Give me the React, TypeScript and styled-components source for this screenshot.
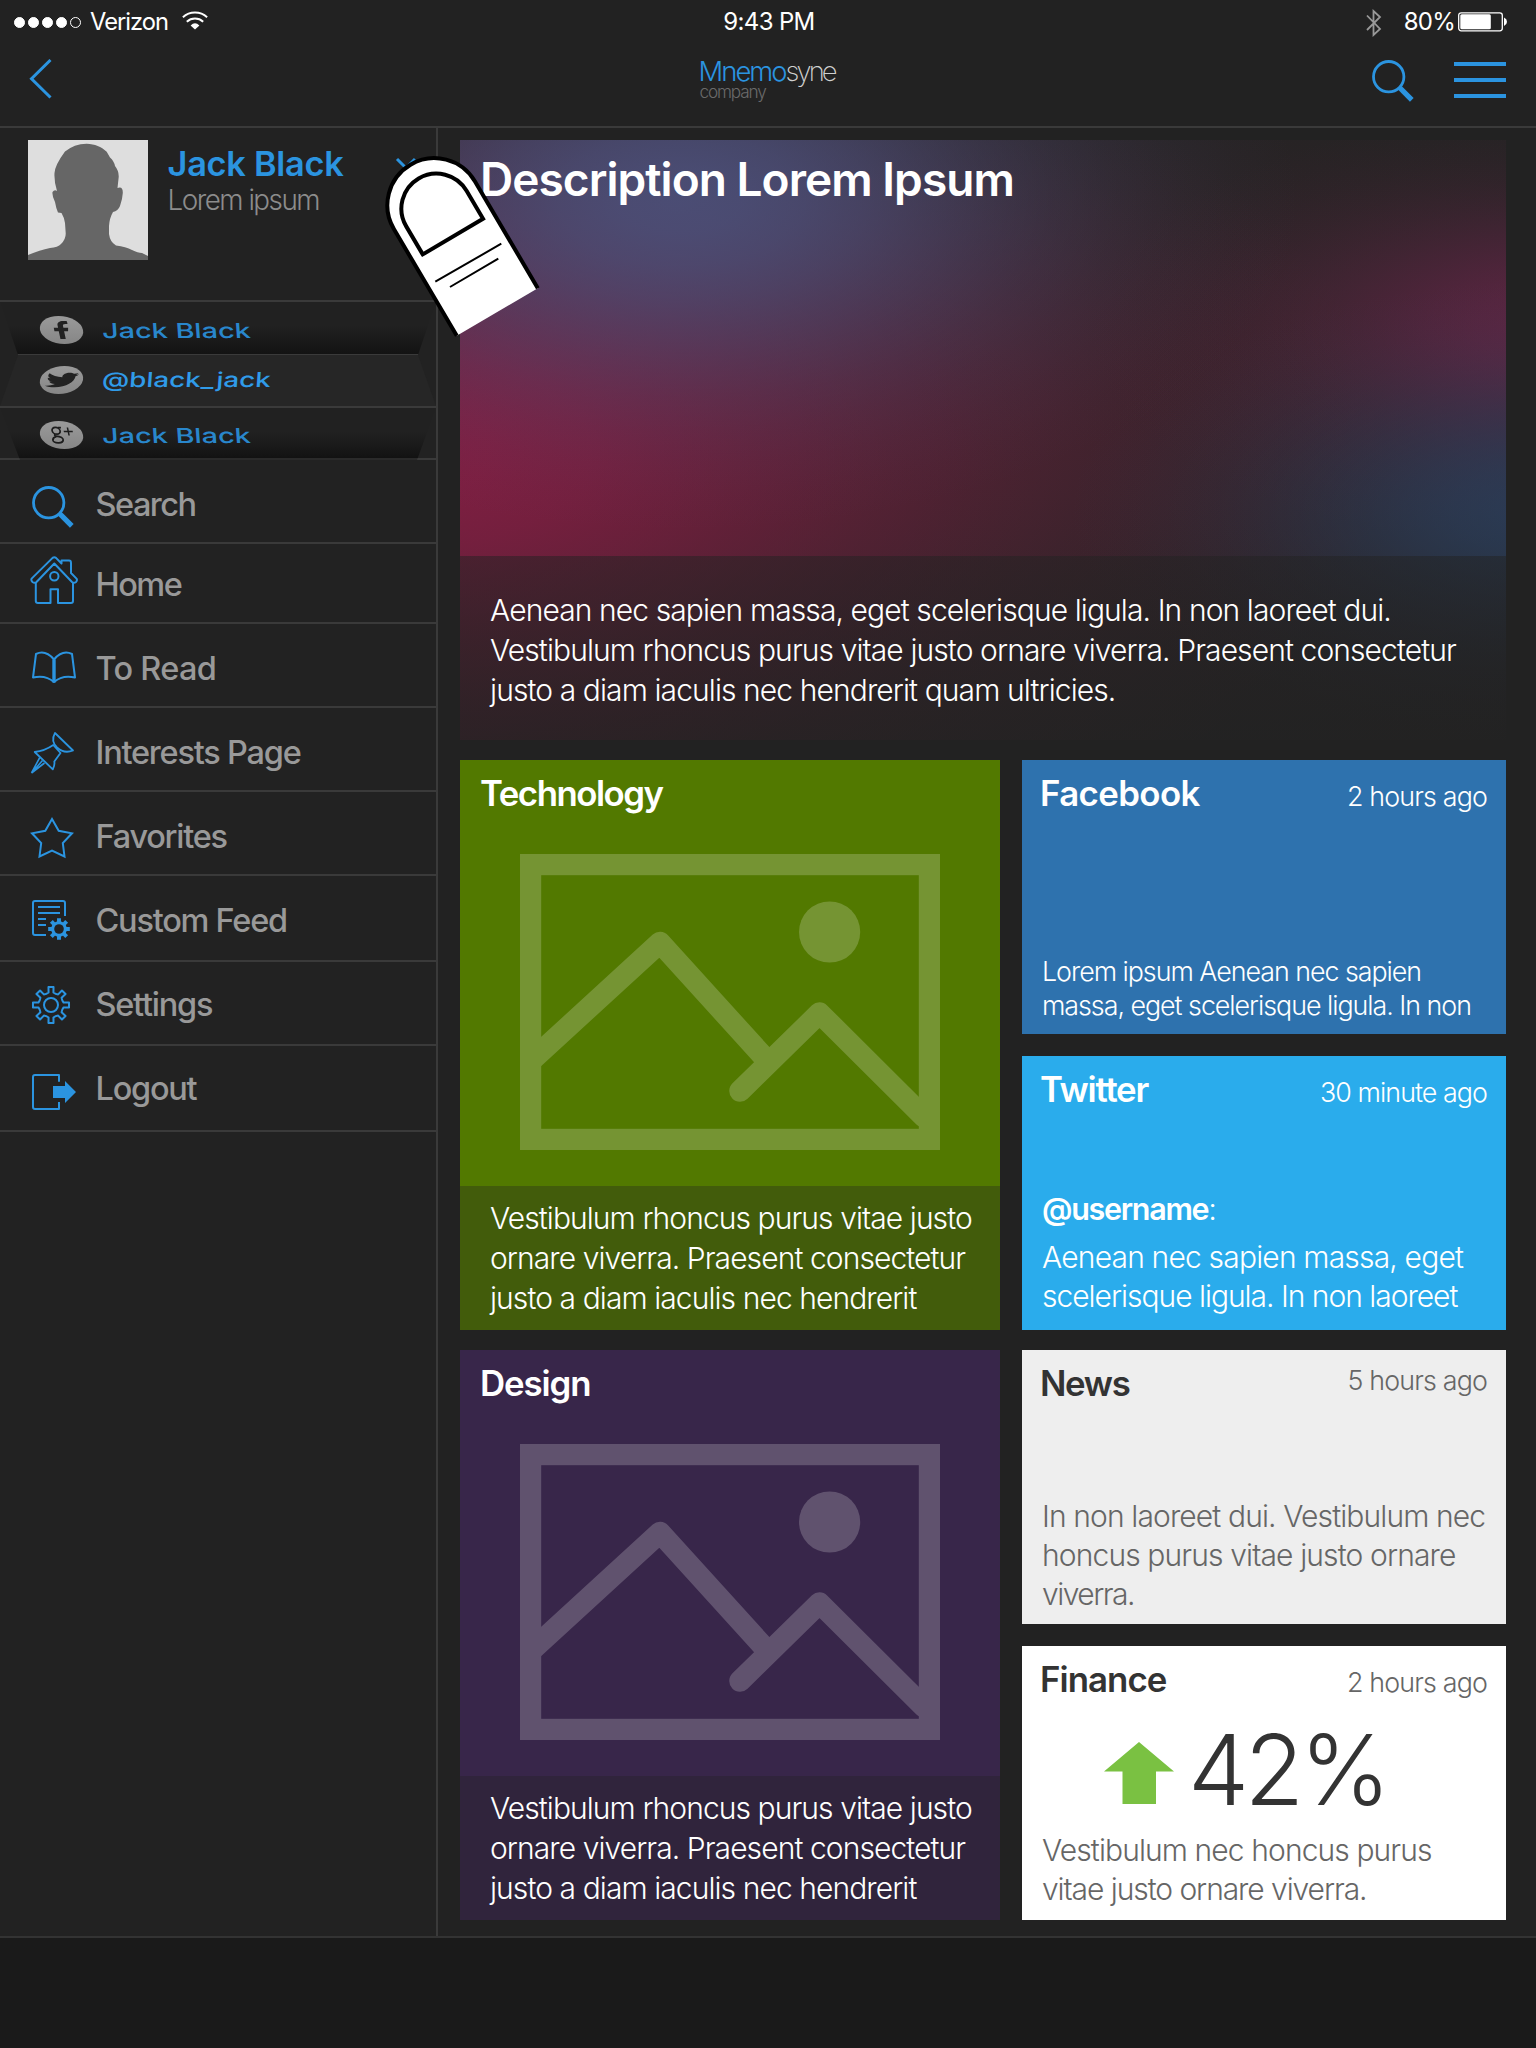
import React from 'react';
import styled, { createGlobalStyle, css } from 'styled-components';
import { FaFacebookF, FaTwitter } from 'react-icons/fa';

const BLUE = '#2b94e0';
const LINE = '#3a3a3a';
const BG = '#222222';

const GlobalStyle = createGlobalStyle`
  * { box-sizing: border-box; }
  body {
    margin: 0;
    background: ${BG};
    color: #fff;
    font-family: Inter, "Liberation Sans", sans-serif;
    font-weight: 300;
    font-kerning: normal;
  }
  svg { display: block; flex: none; }
`;

/* ---------- shared text ---------- */

const Line = styled.div<{ $size: number; $lh: number; $ls?: number; $weight?: number; $color?: string }>`
  font-size: ${p => p.$size}px;
  line-height: ${p => p.$lh}px;
  letter-spacing: ${p => p.$ls ?? 0}px;
  font-weight: ${p => p.$weight ?? 300};
  white-space: nowrap;
  ${p => p.$color && css`color: ${p.$color};`}
`;

/* ---------- frame ---------- */

const Screen = styled.div`
  position: relative;
  display: flex;
  flex-direction: column;
  width: 1536px;
  height: 2048px;
  overflow: hidden;
  background: ${BG};
`;

const StatusBar = styled.div`
  display: grid;
  grid-template-columns: 1fr auto 1fr;
  height: 44px;
`;

const StatusLeft = styled.div`
  display: flex;
  align-items: flex-start;
  padding-left: 14px;
`;

const StatusClock = styled(Line)`
  padding-left: 2px;
`;

const StatusRight = styled.div`
  display: flex;
  align-items: flex-start;
  justify-content: flex-end;
  padding-right: 28px;
`;

const Dots = styled.div`
  display: flex;
  gap: 3px;
  padding-top: 16.5px;
  margin-right: 9px;
`;

const Dot = styled.i<{ $empty?: boolean }>`
  width: 11px;
  height: 11px;
  border-radius: 50%;
  border: 1px solid #fff;
  background: ${p => (p.$empty ? 'transparent' : '#fff')};
`;

const Offset = styled.div<{ $top: number; $left?: number; $right?: number }>`
  margin: ${p => p.$top}px ${p => p.$right ?? 0}px 0 ${p => p.$left ?? 0}px;
`;

const Header = styled.header`
  display: grid;
  grid-template-columns: 1fr auto 1fr;
  height: 84px;
  border-bottom: 2px solid ${LINE};
`;

const HeaderLeft = styled.div`
  padding: 15px 0 0 29px;
`;

const HeaderRight = styled.div`
  display: flex;
  justify-content: flex-end;
  gap: 38px;
  padding: 16px 30px 0 0;
`;

const Burger = styled.div`
  display: flex;
  flex-direction: column;
  gap: 12px;
  padding-top: 2px;
`;

const BurgerBar = styled.i`
  width: 52px;
  height: 4px;
  background: ${BLUE};
`;

const Logo = styled.div`
  width: 139px;
  padding-top: 14px;
`;

const LogoTail = styled.span`
  font-weight: 200;
  letter-spacing: -2.9px;
  color: #d0d0d0;
`;

const LogoSub = styled(Line)`
  padding-left: 1px;
`;

const Body = styled.div`
  display: flex;
  height: 1808px;
`;

const Footer = styled.footer`
  flex: 1;
  border-top: 2px solid #333;
  background: #1a1a1a;
`;

/* ---------- sidebar ---------- */

const Sidebar = styled.aside`
  width: 438px;
  flex: none;
  border-right: 2px solid ${LINE};
`;

const Profile = styled.div`
  display: flex;
  height: 174px;
  padding: 12px 0 0 28px;
  border-bottom: 2px solid ${LINE};
`;

const ProfileText = styled.div`
  width: 228px;
  padding: 4px 0 0 19.5px;
`;

const ChevronBox = styled.div`
  padding: 17px 0 0 19px;
`;

const SocialRow = styled.div<{ $kind: 'in' | 'out' | 'last' }>`
  display: flex;
  align-items: flex-start;
  height: ${p => (p.$kind === 'last' ? 52 : 53)}px;
  padding-left: 40px;
  background: ${p =>
    p.$kind === 'out'
      ? `linear-gradient(${LINE}, ${LINE}) 0 51px / 100% 2px no-repeat, #262626`
      : p.$kind === 'in'
      ? `linear-gradient(${LINE}, ${LINE}) 0 52px / 100% 1px no-repeat, linear-gradient(#212121 45%, #191919 75%, #121212 100%)`
      : `linear-gradient(#212121 45%, #191919 75%, #121212 96%, #2a2a2a 97%)`};
  clip-path: ${p =>
    p.$kind === 'out'
      ? 'polygon(18px 0, 418px 0, 436px 51px, 436px 53px, 0 53px, 0 51px)'
      : p.$kind === 'in'
      ? 'polygon(0 0, 436px 0, 418px 53px, 18px 53px)'
      : 'polygon(0 0, 436px 0, 417px 52px, 20px 52px)'};
`;

const SocialList = styled.div`
  height: 158px;
  background: linear-gradient(${LINE}, ${LINE}) 0 156px / 100% 2px no-repeat;
`;

const Badge = styled.div<{ $skew: number; $top: number; $w: number; $h: number }>`
  display: flex;
  align-items: center;
  justify-content: center;
  width: 43px;
  height: 28px;
  margin-top: ${p => p.$top}px;
  border-radius: 50%;
  background: linear-gradient(#9a9a9a, #868686);
  color: #222;
  transform: skewX(${p => p.$skew}deg);
  svg {
    width: ${p => p.$w}px;
    height: ${p => p.$h}px;
  }
`;

const SocialName = styled.div<{ $skew: number; $top: number; $stretch: number; $bright?: boolean }>`
  margin: ${p => p.$top}px 0 0 19px;
  font-size: 20.6px;
  font-weight: 500;
  line-height: 24px;
  white-space: nowrap;
  color: ${p => (p.$bright ? '#309be9' : '#2987cc')};
  transform: skewX(${p => p.$skew}deg) scaleX(${p => p.$stretch});
  transform-origin: 0 50%;
`;

const MenuItem = styled.div<{ $h: number }>`
  display: flex;
  height: ${p => p.$h + 2}px;
  padding-left: 30px;
  border-bottom: 2px solid ${LINE};
`;

const MenuIcon = styled.div<{ $top: number }>`
  width: 65.5px;
  padding-top: ${p => p.$top}px;
`;

const MenuLabel = styled(Line)<{ $top: number }>`
  margin-top: ${p => p.$top + 1.4}px;
  color: #999;
`;

/* ---------- content ---------- */

const Content = styled.main`
  display: flex;
  flex-direction: column;
  gap: 20px;
  width: 1098px;
  padding: 12px 30px 0 22px;
`;

const glow = (rgb: string, alpha: number, w: number, h: number, x: number, y: number) => {
  const stops = Array.from({ length: 11 }, (_, i) => {
    const t = i / 10;
    const a = alpha * (Math.exp(-3.2 * t * t) - Math.exp(-3.2) * t);
    return `rgba(${rgb}, ${Math.max(0, a).toFixed(3)}) ${i * 10}%`;
  });
  return `radial-gradient(${w}px ${h}px at ${x}px ${y}px, ${stops.join(', ')})`;
};

const Hero = styled.section`
  display: flex;
  flex-direction: column;
  justify-content: space-between;
  height: 600px;
  background:
    ${glow('76, 84, 128', 0.85, 620, 330, 220, 60)},
    ${glow('42, 68, 102', 0.7, 480, 230, 1090, 370)},
    ${glow('108, 38, 76', 0.75, 480, 220, 1110, 190)},
    ${glow('140, 30, 70', 0.88, 1000, 500, -70, 310)},
    ${glow('68, 36, 48', 0.55, 900, 420, 620, 260)},
    #232323;
`;

const HeroTitle = styled(Line)`
  padding: 11px 0 0 20px;
`;

const HeroCaption = styled.div`
  height: 184px;
  padding: 34px 0 0 30px;
  background: linear-gradient(rgba(34, 34, 34, 0.5), rgba(34, 34, 34, 0.65));
`;

const TileRow = styled.div`
  display: flex;
  gap: 22px;
`;

const Stack = styled.div`
  display: flex;
  flex-direction: column;
  gap: 22px;
`;

const PictureTile = styled.article<{ $bg: string }>`
  display: flex;
  flex-direction: column;
  width: 540px;
  height: 570px;
  background: ${p => p.$bg};
`;

const PictureTitle = styled(Line)`
  padding: 12px 0 0 20px;
`;

const Picture = styled.div`
  padding: 40px 0 0 60px;
`;

const PictureCaption = styled.div`
  height: 144px;
  margin-top: auto;
  padding: 12px 0 0 30px;
  background: rgba(34, 34, 34, 0.33);
`;

const FeedTile = styled.article<{ $bg: string; $pad: number; $title: string; $text: string }>`
  display: flex;
  flex-direction: column;
  width: 484px;
  height: 274px;
  padding: 12px 19px ${p => p.$pad}px 18px;
  background: ${p => p.$bg};
  color: ${p => p.$text};
  h2 { color: ${p => p.$title}; }
`;

const FeedHead = styled.div`
  display: flex;
  justify-content: space-between;
`;

const FeedTitle = styled.h2<{ $ls: number }>`
  margin: 0;
  font-size: 34.8px;
  line-height: 42px;
  font-weight: 600;
  letter-spacing: ${p => p.$ls}px;
`;

const FeedBody = styled.div`
  margin-top: auto;
  padding-left: 2px;
`;

const Stat = styled.div`
  display: flex;
  align-items: flex-start;
  height: 62px;
  margin: 39px 0 0 64px;
`;

const Author = styled.strong`
  font-weight: 600;
  letter-spacing: -1.3px;
`;

const Pointer = styled.svg`
  position: absolute;
  left: 380px;
  top: 140px;
`;

/* ---------- icons ---------- */

const stroke = { fill: 'none', stroke: BLUE, strokeWidth: 2, strokeLinejoin: 'round' as const };

const SearchIcon = ({ x = 0 }: { x?: number }) => (
  <svg width={44 + x} height="44" viewBox={`${-x} 0 ${44 + x} 44`} fill="none" stroke={BLUE}>
    <circle cx="16.7" cy="16.7" r="15.2" strokeWidth="2.8" />
    <path d="M27 27 L39.8 39.8" strokeWidth="5.2" />
  </svg>
);

const HomeIcon = () => (
  <svg width="48" height="48" {...stroke}>
    <path d="M1.6 22.6 L22.6 1.9 Q24.3 .6 26 1.9 L31.5 7.5 V4.6 H39 Q41 4.6 41 7 V17 L46.5 22.6 Q47.6 24.5 46 26 Q44 27.6 42 26 L24.3 7.5 L6.5 26 Q4.5 27.6 2.5 26 Q.8 24.5 1.6 22.6Z" />
    <path d="M5.8 26.5 V45 Q5.8 47 8 47 H20.5 V33.3 H28 V47 H41 Q43 47 43 45 V26.5" />
    <circle cx="24.3" cy="20.3" r="4.2" />
  </svg>
);

const BookIcon = () => (
  <svg width="48" height="36" {...stroke}>
    <path d="M24 9.5 Q15.5 -.5 6 4 L3 27.5 Q15.5 24.5 24 32 Q32.5 24.5 45 27.5 L42 4 Q32.5 -.5 24 9.5Z" />
    <path d="M24 9.5V32.5" strokeWidth="3.4" />
  </svg>
);

const PinIcon = () => (
  <svg width="48" height="46" {...stroke} strokeWidth={1.8}>
    <path d="M25 3 L43 20.5 Q34 24 27 17.5 Q20.5 11 25 3Z" />
    <path d="M23.3 15 Q14.5 21 4.7 22 L22.8 39.3 Q25 35 24.3 31.5 L30.5 23 L23.3 15Z" />
    <path d="M1.5 43 L9.8 27.5 M1.5 43 L14.5 33 M1.5 43 L12.5 30.5" strokeWidth="1.6" />
  </svg>
);

const StarIcon = () => (
  <svg width="46" height="44" {...stroke} strokeLinejoin="miter">
    <path d="M22 3 L28.7 14.8 L42 17.3 L32.8 27 L34.5 40.5 L22 34.7 L9.5 40.5 L11.2 27 L2 17.3 L15.3 14.8Z" />
  </svg>
);

const gearPath = (cx: number, cy: number, R: number, r: number, tip: number, root: number) => {
  const pt = (rad: number, deg: number) => {
    const a = (deg * Math.PI) / 180;
    return `${(cx + rad * Math.sin(a)).toFixed(2)} ${(cy - rad * Math.cos(a)).toFixed(2)}`;
  };
  let d = '';
  for (let i = 0; i < 8; i++) {
    const a = i * 45;
    d += `${i ? 'L' : 'M'}${pt(r, a - root)} L${pt(R, a - tip)} L${pt(R, a + tip)} L${pt(r, a + root)} `;
    d += `Q${pt(r * 0.93, a + 22.5)} ${pt(r, a + 45 - root)} `;
  }
  return d + 'Z';
};

const FeedIcon = () => (
  <svg width="42" height="44" {...stroke}>
    <path d="M35 18 V5 Q35 3 33 3 H5 Q3 3 3 5 V35 Q3 37 5 37 H16" />
    <path d="M8 9H30 M8 15H30 M8 21H16 M8 27H16" />
    <path d={gearPath(29, 31, 11, 8, 10.5, 14)} fill={BLUE} stroke="none" />
    <circle cx="29" cy="31" r="4.8" fill={BG} stroke="none" />
  </svg>
);

const GearIcon = () => (
  <svg width="42" height="42" {...stroke}>
    <path d={gearPath(21, 21, 18.2, 12.8, 8, 11)} />
    <circle cx="21" cy="21" r="7" />
  </svg>
);

const LogoutIcon = () => (
  <svg width="48" height="42" {...stroke}>
    <path d="M29 9.8 V3 H5 Q3 3 3 5 V35 Q3 37 5 37 H29 V30" />
    <path d="M23 14 H35 V9 L46 20 L35 31 V26 H23Z" fill={BLUE} stroke="none" />
  </svg>
);

const WifiIcon = () => (
  <svg width="26" height="20" viewBox="0 0 26 20" fill="none" stroke="#fff" strokeWidth="2">
    <path d="M.9 6.2 Q6 1.6 13 1.6 Q20 1.6 25.1 6.2" />
    <path d="M4.8 10.8 Q8.3 7.6 13 7.6 Q17.7 7.6 21.2 10.8" />
    <path d="M8.6 14.4 Q13 10 17.4 14.4 L13 18.6Z" fill="#fff" stroke="none" />
  </svg>
);

const BluetoothIcon = () => (
  <svg width="16" height="28" viewBox="0 0 16 28" fill="none" stroke="#999" strokeWidth="1.8">
    <path d="M1 6.5 L14 20 L7.5 26 V2 L14 8 L1 21" />
  </svg>
);

const BatteryIcon = () => (
  <svg width="50" height="20" viewBox="0 0 50 20">
    <rect x=".7" y=".8" width="43.6" height="18" rx="2.5" fill="none" stroke="#fff" strokeWidth="1.3" />
    <rect x="2.3" y="2.3" width="30.5" height="15" rx="1.5" fill="#fff" />
    <path d="M46 5.5 Q49 7 49 9.8 Q49 12.5 46 14Z" fill="#fff" />
  </svg>
);

const Avatar = () => (
  <svg width="120" height="120" viewBox="0 0 120 120">
    <rect width="120" height="120" fill="#dedede" />
    <path
      fill="#666"
      d="M58.7 3.7 C67 4 73 6.5 78.7 11.7 L82 17.5 Q86 21 87 26 Q91 31 90.7 37 L89.5 48 Q95 46 94.8 53 Q94.5 59 92 66 Q90 71 85 72 Q81.5 78 81 86 V94 Q82 102 88 105.5 Q98 106.5 104 110 Q110 113 114 113 L120 116 V120 H0 V115 Q12 110 22 108 Q30 107.5 33 104 Q38 99 37.7 93 L37 83 Q36 77 33.5 73 L30 72.5 Q28 68 27 62 Q24 56 24.5 52 Q26.5 49 29 51 Q26 42 26.5 33 Q27 25 37 11.5 Q46 4 58.7 3.7Z"
    />
  </svg>
);

const PlusGlyph = () => (
  <svg viewBox="0 0 26 20" fill="none" stroke="#1d1d1d" strokeWidth="1.7">
    <ellipse cx="8" cy="5.8" rx="4" ry="3.4" />
    <path d="M10.5 2.6 H13.5 M6.5 9 Q4.5 10.5 7 11.2 Q13.5 12 13.2 14.8 Q12.5 18 7.5 17.8 Q2.5 17.5 2.8 15 Q3.2 12.5 7 11.5" />
    <path d="M20 2.5 V10.5 M15.5 6.5 H24.5" strokeWidth="1.5" />
  </svg>
);

const PlaceholderPicture = () => (
  <svg width="420" height="296" viewBox="0 0 420 296">
    <g opacity=".2" fill="none" stroke="#fff" strokeWidth="21.5" strokeLinecap="round" strokeLinejoin="round">
      <rect x="10.6" y="10.6" width="398.8" height="274.8" strokeLinejoin="miter" strokeWidth="21.2" />
      <path d="M14 204 L140 88.5 L243 202" />
      <path d="M220 237 L299.5 159 L404 263" />
      <circle cx="309.6" cy="78" r="30.6" fill="#fff" stroke="none" />
    </g>
  </svg>
);

const UpArrow = () => (
  <svg width="70" height="62" viewBox="0 0 70 62">
    <path d="M35 0 L70 29.6 H52 V62 H18.5 V29.6 H0Z" fill="#7ac142" />
  </svg>
);

const Fingertip = () => (
  <Pointer width="180" height="210" viewBox="380 140 180 210">
    <g transform="translate(497.3 312) rotate(-30.5)" stroke="#000" strokeWidth="4">
      <path d="M-47 0 V-124 A47 47 0 0 1 47 -124 V0" fill="#fff" />
      <path d="M-35 -87.5 V-120 A35 35 0 0 1 35 -120 V-87.5Z" fill="#fff" />
    </g>
    <path d="M435.3 281.7 L501.3 243.7 M450 287 L498.3 258.7" stroke="#000" strokeWidth="2" />
  </Pointer>
);

/* ---------- data ---------- */

const menu = [
  { label: 'Search', ls: -1.5, h: 82, it: 26, lt: 24, icon: <SearchIcon x={2} /> },
  { label: 'Home', ls: -1.5, h: 78, it: 12, lt: 20, icon: <HomeIcon /> },
  { label: 'To Read', ls: -0.7, h: 82, it: 26, lt: 24, icon: <BookIcon /> },
  { label: 'Interests Page', ls: -1.22, h: 82, it: 22, lt: 24, icon: <PinIcon /> },
  { label: 'Favorites', ls: -1.25, h: 82, it: 24, lt: 24, icon: <StarIcon /> },
  { label: 'Custom Feed', ls: -1.24, h: 84, it: 22, lt: 24, icon: <FeedIcon /> },
  { label: 'Settings', ls: -1.24, h: 82, it: 22, lt: 22, icon: <GearIcon /> },
  { label: 'Logout', ls: -1.25, h: 84, it: 26, lt: 22, icon: <LogoutIcon /> },
];

const captionLines = [
  'Vestibulum rhoncus purus vitae justo',
  'ornare viverra. Praesent consectetur',
  'justo a diam iaculis nec hendrerit',
];

const heroLines = [
  'Aenean nec sapien massa, eget scelerisque ligula. In non laoreet dui.',
  'Vestibulum rhoncus purus vitae justo ornare viverra. Praesent consectetur',
  'justo a diam iaculis nec hendrerit quam ultricies.',
];

/* ---------- composite parts ---------- */

const PictureCard = ({ title, ls, bg }: { title: string; ls: number; bg: string }) => (
  <PictureTile $bg={bg}>
    <PictureTitle $size={34.8} $lh={42} $ls={ls} $weight={600}>{title}</PictureTitle>
    <Picture><PlaceholderPicture /></Picture>
    <PictureCaption>
      {captionLines.map(t => <Line key={t} $size={30} $lh={40} $ls={-0.92}>{t}</Line>)}
    </PictureCaption>
  </PictureTile>
);

type FeedProps = {
  title: string;
  ls: number;
  time: string;
  timeTop?: number;
  timeLs?: number;
  bg: string;
  pad: number;
  titleColor?: string;
  textColor?: string;
  lines: [text: string, spacing: number][];
  small?: boolean;
  children?: React.ReactNode;
};

const FeedCard = ({ title, ls, time, timeTop = 3, timeLs = -0.84, bg, pad, titleColor = '#fff', textColor = '#fff', lines, small, children }: FeedProps) => (
  <FeedTile $bg={bg} $pad={pad} $title={titleColor} $text={textColor}>
    <FeedHead>
      <FeedTitle $ls={ls}>{title}</FeedTitle>
      <Offset $top={timeTop}><Line $size={26.8} $lh={42} $ls={timeLs}>{time}</Line></Offset>
    </FeedHead>
    {children}
    <FeedBody>
      {lines.map(([text, spacing]) => (
        <Line key={text} $size={small ? 26.8 : 30} $lh={small ? 34 : 39} $ls={spacing}>{text}</Line>
      ))}
    </FeedBody>
  </FeedTile>
);

export default function App() {
  return (
    <>
      <GlobalStyle />
      <Screen>
        <StatusBar>
          <StatusLeft>
            <Dots><Dot /><Dot /><Dot /><Dot /><Dot $empty /></Dots>
            <Line $size={23.7} $lh={43} $ls={-0.97} $weight={400}>Verizon</Line>
            <Offset $top={11} $left={13.5}><WifiIcon /></Offset>
          </StatusLeft>
          <StatusClock $size={24} $lh={43} $ls={-0.66} $weight={400}>9:43 PM</StatusClock>
          <StatusRight>
            <Offset $top={9} $right={22}><BluetoothIcon /></Offset>
            <Line $size={24} $lh={43} $ls={-0.75} $weight={400}>80%</Line>
            <Offset $top={12} $left={3}><BatteryIcon /></Offset>
          </StatusRight>
        </StatusBar>

        <Header>
          <HeaderLeft>
            <svg width="24" height="40" fill="none" stroke={BLUE} strokeWidth="3">
              <path d="M21.5 1 L2.5 19.7 L21.5 38.5" />
            </svg>
          </HeaderLeft>
          <Logo>
            <Line $size={27.4} $lh={27} $ls={-1.95} $color={BLUE}>Mnemo<LogoTail>syne</LogoTail></Line>
            <LogoSub $size={17.2} $lh={14} $ls={-1.15} $color="#6a6a6a">company</LogoSub>
          </Logo>
          <HeaderRight>
            <SearchIcon />
            <Burger><BurgerBar /><BurgerBar /><BurgerBar /></Burger>
          </HeaderRight>
        </Header>

        <Body>
          <Sidebar>
            <Profile>
              <Avatar />
              <ProfileText>
                <Line $size={34.3} $lh={40} $ls={-0.25} $weight={600} $color={BLUE}>Jack Black</Line>
                <Line $size={27.8} $lh={33} $ls={-1.5} $color="#8c8c8c">Lorem ipsum</Line>
              </ProfileText>
              <ChevronBox>
                <svg width="24" height="14" fill="none" stroke={BLUE} strokeWidth="3">
                  <path d="M2 2 L11 11 L20 2" />
                </svg>
              </ChevronBox>
            </Profile>

            <SocialList>
              <SocialRow $kind="in">
                <Badge $skew={12} $top={14} $w={17} $h={18}>
                  <FaFacebookF preserveAspectRatio="none" />
                </Badge>
                <SocialName $skew={4} $top={17} $stretch={1.4}>Jack Black</SocialName>
              </SocialRow>
              <SocialRow $kind="out">
                <Badge $skew={-12} $top={11} $w={32} $h={18}>
                  <FaTwitter preserveAspectRatio="none" />
                </Badge>
                <SocialName $skew={-4} $top={13} $stretch={1.35} $bright>@black_jack</SocialName>
              </SocialRow>
              <SocialRow $kind="last">
                <Badge $skew={12} $top={13} $w={26} $h={20}><PlusGlyph /></Badge>
                <SocialName $skew={4} $top={16} $stretch={1.4}>Jack Black</SocialName>
              </SocialRow>
            </SocialList>

            {menu.map(m => (
              <MenuItem key={m.label} $h={m.h}>
                <MenuIcon $top={m.it}>{m.icon}</MenuIcon>
                <MenuLabel $top={m.lt} $size={32.5} $lh={40} $ls={m.ls} $weight={500}>{m.label}</MenuLabel>
              </MenuItem>
            ))}
          </Sidebar>

          <Content>
            <Hero>
              <HeroTitle $size={46} $lh={56} $ls={-0.95} $weight={600}>Description Lorem Ipsum</HeroTitle>
              <HeroCaption>
                {heroLines.map(t => <Line key={t} $size={30} $lh={40} $ls={-0.9}>{t}</Line>)}
              </HeroCaption>
            </Hero>

            <TileRow>
              <PictureCard title="Technology" ls={-1.49} bg="#527900" />
              <Stack>
                <FeedCard title="Facebook" ls={-0.6} time="2 hours ago" bg="#2e72ae" pad={12} small
                  lines={[['Lorem ipsum Aenean nec sapien', -1.02], ['massa, eget scelerisque ligula. In non', -1.02]]} />
                <FeedCard title="Twitter" ls={-1.23} time="30 minute ago" timeLs={-0.93} bg="#2aacec" pad={14}
                  lines={[['Aenean nec sapien massa, eget', -0.82], ['scelerisque ligula. In non laoreet', -1.02]]}>
                  <Offset $top={76} $left={2}>
                    <Line $size={30.5} $lh={39}><Author>@username</Author>:</Line>
                  </Offset>
                </FeedCard>
              </Stack>
            </TileRow>

            <TileRow>
              <PictureCard title="Design" ls={-1.1} bg="#38264a" />
              <Stack>
                <FeedCard title="News" ls={-1.3} time="5 hours ago" timeTop={-3} bg="#eeeeee" pad={10}
                  titleColor="#333" textColor="#666"
                  lines={[['In non laoreet dui. Vestibulum nec', -0.88], ['honcus purus vitae justo ornare', -0.87], ['viverra.', -1.5]]} />
                <FeedCard title="Finance" ls={-0.93} time="2 hours ago" bg="#ffffff" pad={11}
                  titleColor="#333" textColor="#666"
                  lines={[['Vestibulum nec honcus purus', -0.9], ['vitae justo ornare viverra.', -1.07]]}>
                  <Stat>
                    <UpArrow />
                    <Offset $top={1} $left={14}>
                      <Line $size={97.3} $lh={54} $ls={-4.6} $color="#333">42%</Line>
                    </Offset>
                  </Stat>
                </FeedCard>
              </Stack>
            </TileRow>
          </Content>
        </Body>

        <Footer />
        <Fingertip />
      </Screen>
    </>
  );
}
